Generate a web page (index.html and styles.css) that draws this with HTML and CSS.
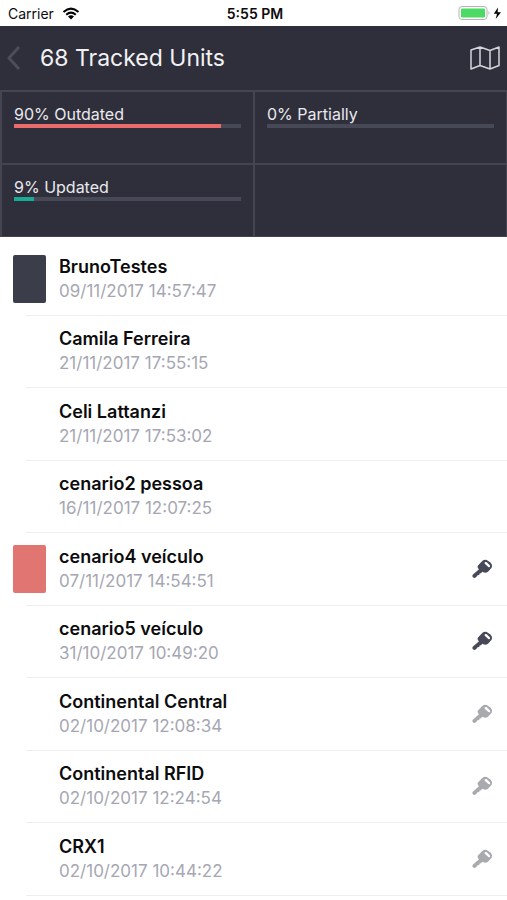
FILE: index.html
```
<!DOCTYPE html>
<html lang="en">
<head>
<meta charset="utf-8">
<meta name="viewport" content="width=device-width, initial-scale=1">
<title>Tracked Units</title>
<link rel="stylesheet" href="styles.css">
</head>
<body>
<svg class="symbols" aria-hidden="true">
  <symbol id="key" viewBox="0 0 22 22">
    <path fill-rule="evenodd" d="M6 7.500 L10.500 2.800 Q12.500 1.200 14.700 2 L18.500 4.500 Q20.800 6.800 19.800 9.500 L16 13.700 Q13.800 15.300 11.500 14.300 L10.300 13.800 L9 15.300 L7.600 15.500 L7.200 17 L5.600 17.300 L4 19.300 Q1.800 20.800 0.500 18.800 Q0 17.500 1 16.600 L7 11.200 L6 10.200 Q5 8.800 6 7.500Z M12.800 4.300 Q12.200 5.200 13 6 L16.300 9.100 Q17.300 9.700 18 8.900 Q18.500 8 17.800 7.200 L14.800 4.300 Q13.700 3.500 12.800 4.300Z"/>
  </symbol>
</svg>
<div class="status">
  <div class="status-carrier">
    <span>Carrier</span>
    <svg class="wifi" viewBox="0 0 18 13" aria-hidden="true">
      <path d="M1.500 5 Q9 -1.800 16.500 5 M4.200 7.800 Q9 3.500 13.800 7.800"/>
      <path class="wifi-dot" d="M6 9.400 Q9 7 12 9.400 L9 12.500Z"/>
    </svg>
  </div>
  <time class="status-time">5:55 PM</time>
  <svg class="battery" viewBox="0 0 44 16" aria-hidden="true">
    <rect class="battery-case" x="1" y="1.500" width="28" height="13" rx="3"/>
    <rect class="battery-level" x="3" y="3.500" width="24" height="9" rx="1"/>
    <path class="battery-tip" d="M30.500 6 Q32.500 8 30.500 10Z"/>
    <path d="M40 2.500 L35.800 8.700 H39 L37.700 14 L43 7.200 H39.600Z"/>
  </svg>
</div>
<header class="bar">
  <button class="icon-button back" type="button" aria-label="Back">
    <svg viewBox="0 0 14 24"><path d="M12 1 L2 12 L12 23"/></svg>
  </button>
  <h1>68 Tracked Units</h1>
  <button class="icon-button map" type="button" aria-label="Map">
    <svg viewBox="0 0 30 24"><path d="M1 4 L10 1 L20 4.500 L29 1 V19.500 L20 23 L10 19.500 L1 23Z M10 1 V19.500 M20 4.500 V23"/></svg>
  </button>
</header>
<section class="stats">
  <div class="stat">
    <span>90% Outdated</span>
    <div class="track"><div class="fill outdated" style="width:91%"></div></div>
  </div>
  <div class="stat">
    <span>0% Partially</span>
    <div class="track"></div>
  </div>
  <div class="stat">
    <span>9% Updated</span>
    <div class="track"><div class="fill updated" style="width:9%"></div></div>
  </div>
  <div class="stat"></div>
</section>
<ul class="units">
  <li class="unit"><span class="swatch dark"></span><div class="info"><h2>BrunoTestes</h2><time>09/11/2017 14:57:47</time></div></li>
  <li class="unit"><span class="swatch"></span><div class="info"><h2>Camila Ferreira</h2><time>21/11/2017 17:55:15</time></div></li>
  <li class="unit"><span class="swatch"></span><div class="info"><h2>Celi Lattanzi</h2><time>21/11/2017 17:53:02</time></div></li>
  <li class="unit"><span class="swatch"></span><div class="info"><h2>cenario2 pessoa</h2><time>16/11/2017 12:07:25</time></div></li>
  <li class="unit"><span class="swatch red"></span><div class="info"><h2>cenario4 veículo</h2><time>07/11/2017 14:54:51</time></div><svg class="key on" aria-hidden="true"><use href="#key"/></svg></li>
  <li class="unit"><span class="swatch"></span><div class="info"><h2>cenario5 veículo</h2><time>31/10/2017 10:49:20</time></div><svg class="key on" aria-hidden="true"><use href="#key"/></svg></li>
  <li class="unit"><span class="swatch"></span><div class="info"><h2>Continental Central</h2><time>02/10/2017 12:08:34</time></div><svg class="key" aria-hidden="true"><use href="#key"/></svg></li>
  <li class="unit"><span class="swatch"></span><div class="info"><h2>Continental RFID</h2><time>02/10/2017 12:24:54</time></div><svg class="key" aria-hidden="true"><use href="#key"/></svg></li>
  <li class="unit"><span class="swatch"></span><div class="info"><h2>CRX1</h2><time>02/10/2017 10:44:22</time></div><svg class="key" aria-hidden="true"><use href="#key"/></svg></li>
</ul>
</body>
</html>
```
FILE: styles.css
```
* { box-sizing: border-box; }

body {
  margin: 0;
  background: #fff;
  color: #0c0c0e;
  font-family: Inter, "Liberation Sans", sans-serif;
}

h1, h2, ul { margin: 0; padding: 0; }

.symbols { display: none; }

/* Status bar */
.status {
  display: grid;
  grid-template-columns: 1fr auto 1fr;
  align-items: center;
  height: 26px;
  padding: 0 5px 0 8px;
  font-size: 14px;
}
.status-carrier { display: flex; align-items: center; gap: 8px; }
.status-time { font-weight: 600; }
.wifi { width: 18px; height: 13px; fill: none; stroke: #000; stroke-width: 2; }
.wifi-dot { fill: #000; stroke: none; }
.battery { width: 44px; height: 16px; justify-self: end; }
.battery-case { fill: #fff; stroke: #b4b4b6; }
.battery-level { fill: #4cd964; }
.battery-tip { fill: #b4b4b6; }

/* Title bar */
.bar {
  display: flex;
  align-items: center;
  height: 64px;
  padding: 0 7px;
  background: #2f2f3b;
  color: #f2f2f5;
}
.bar h1 { flex: 1; font-size: 23px; font-weight: 400; line-height: 28px; }
.icon-button {
  display: flex;
  padding: 0;
  border: 0;
  background: none;
  cursor: pointer;
}
.icon-button svg { height: 24px; fill: none; stroke-linejoin: round; }
.back { width: 33px; }
.back svg { width: 14px; stroke: #4b4d5b; stroke-width: 3; }
.map svg { width: 30px; stroke: #d5d5dc; stroke-width: 1.500; }

/* Statistics */
.stats {
  display: grid;
  grid-template-columns: 1fr 1fr;
  grid-auto-rows: 71px;
  gap: 2px;
  padding: 2px 1px 1px 2px;
  background: #454552;
}
.stat {
  padding: 12px;
  background: #2f2f3b;
  color: #e9e9ee;
  font-size: 16px;
  line-height: 20px;
}
.track { height: 4px; background: #484956; }
.fill { height: 100%; }
.outdated { background: #e96b6c; }
.updated { background: #18ab97; }

/* Unit list */
.units { padding-top: 6px; list-style: none; }
.unit {
  display: flex;
  align-items: center;
  height: 73px;
  padding: 0 13px 2px;
  background: linear-gradient(#eeeef1, #eeeef1) 26px 100% / 100% 1px no-repeat;
}
.unit:nth-child(even) { height: 72px; }
.swatch { width: 33px; height: 48px; margin-right: 13px; border-radius: 2px; }
.dark { background: #3b3d4b; }
.red { background: #e07571; }
.info { flex: 1; }
.info h2 { font-size: 18px; font-weight: 600; line-height: 24px; }
.info time { display: block; color: #a6a7b2; font-size: 17px; line-height: 24px; }
.key { width: 22px; height: 22px; fill: #a9aaae; }
.on { fill: #474858; }
```
